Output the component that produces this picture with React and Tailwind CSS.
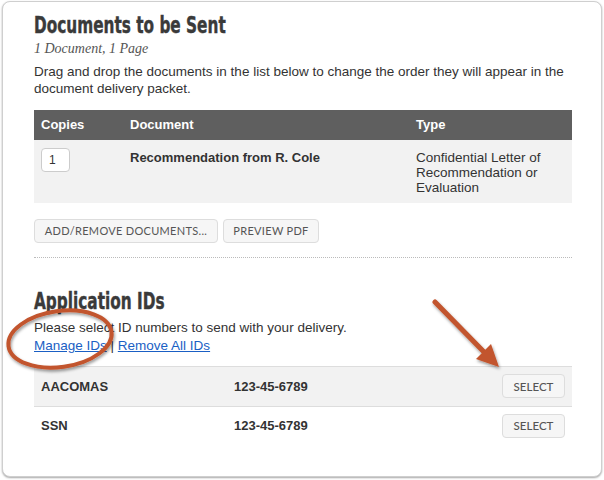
export default function App() {
  const sans = { fontFamily: '"Liberation Sans", Arial, sans-serif' }
  const heading = { fontFamily: '"DejaVu Sans Condensed", "Liberation Sans Narrow", sans-serif', WebkitTextStroke: '0.4px #3a3a3a' }
  const ids = [
    { name: 'AACOMAS', num: '123-45-6789', shaded: true },
    { name: 'SSN', num: '123-45-6789', shaded: false },
  ]

  return (
    <div className="relative h-[480px] w-[604px] bg-white pt-px" style={sans}>
      <div className="relative mx-[2px] h-[476px] rounded-lg border border-[#cfcfcf] bg-white px-[31px] text-[#333] shadow-[0_1px_2px_rgba(0,0,0,0.35)]">
        <h2 className="mt-[9px] origin-left scale-x-[0.74] text-[23px] font-bold leading-[28px] text-[#3a3a3a] whitespace-nowrap" style={heading}>
          Documents to be Sent
        </h2>
        <p className="mt-[1px] text-[14px] italic leading-[18px] text-[#555]" style={{ fontFamily: '"Liberation Serif", serif' }}>
          1 Document, 1 Page
        </p>
        <p className="mt-[5px] text-[13.5px] leading-[17px]">
          Drag and drop the documents in the list below to change the order they will appear in the document delivery packet.
        </p>

        <div className="mt-[13px] w-[538px] text-[13px]">
          <div className="grid h-[30px] grid-cols-[89px_286px_163px] items-center bg-[#5f5f5f] font-bold text-white">
            <div className="px-[7px]">Copies</div>
            <div className="px-[7px]">Document</div>
            <div className="px-[7px]">Type</div>
          </div>
          <div className="grid h-[63px] grid-cols-[89px_286px_163px] bg-[#f2f2f2] pt-[8px] leading-[15px]">
            <div className="px-[7px]">
              <div className="flex h-[24px] w-[29px] items-center rounded border border-[#ccc] bg-white pl-[7px] text-[12px]">1</div>
            </div>
            <div className="px-[7px] pt-[2px] font-bold">Recommendation from R. Cole</div>
            <div className="px-[7px] pt-[2px] text-[13.5px]">Confidential Letter of Recommendation or Evaluation</div>
          </div>
        </div>

        <div className="mt-[16px] flex gap-[5px]" style={{ fontFamily: 'Lato, sans-serif' }}>
          <button className="h-[24px] w-[184px] rounded-sm border border-[#ddd] bg-[#f6f6f6] text-[11px] tracking-[0.3px] text-[#555]">
            ADD/REMOVE DOCUMENTS...
          </button>
          <button className="h-[24px] w-[96px] rounded-sm border border-[#ddd] bg-[#f6f6f6] text-[11px] tracking-[0.3px] text-[#555]">
            PREVIEW PDF
          </button>
        </div>

        <div className="mt-[14px] w-[538px] border-t border-dotted border-[#bbb]" />

        <h2 className="mt-[29px] origin-left scale-x-[0.74] text-[23px] font-bold leading-[28px] text-[#3a3a3a] whitespace-nowrap" style={heading}>
          Application IDs
        </h2>
        <p className="mt-[4px] text-[13.5px] leading-[18px]">Please select ID numbers to send with your delivery.</p>
        <p className="text-[13.5px] leading-[18px]">
          <a className="text-[#1a5fc4] underline">Manage IDs</a> | <a className="text-[#1a5fc4] underline">Remove All IDs</a>
        </p>

        <div className="mt-[11px] w-[538px] text-[13px]">
          {ids.map((r) => (
            <div
              key={r.name}
              className={`grid h-[39.5px] grid-cols-[193px_1fr_auto] items-center border-t border-[#ddd] pl-[7px] pr-[7px] ${r.shaded ? 'bg-[#f2f2f2]' : 'bg-white'}`}
            >
              <div className="font-bold">{r.name}</div>
              <div className="font-bold">{r.num}</div>
              <button
                className="h-[24px] w-[63px] rounded-sm border border-[#ddd] bg-[#f6f6f6] text-[11.5px] font-medium text-[#555]"
                style={{ fontFamily: 'Lato, sans-serif' }}
              >
                SELECT
              </button>
            </div>
          ))}
        </div>
      </div>

      <svg className="pointer-events-none absolute left-0 top-0" width="604" height="480" viewBox="0 0 604 480">
        <defs>
          <filter id="sh" x="-20%" y="-20%" width="140%" height="140%">
            <feDropShadow dx="1" dy="2" stdDeviation="1.5" floodColor="#000" floodOpacity="0.4" />
          </filter>
        </defs>
        <g filter="url(#sh)">
          <ellipse cx="60" cy="339" rx="52" ry="28" fill="none" stroke="#c2542d" strokeWidth="4" transform="rotate(-8 60 339)" />
          <line x1="435" y1="302" x2="484" y2="352" stroke="#c2542d" strokeWidth="5" strokeLinecap="round" />
          <polygon points="499,367 476,359 491,344" fill="#c2542d" />
        </g>
      </svg>
    </div>
  )
}
